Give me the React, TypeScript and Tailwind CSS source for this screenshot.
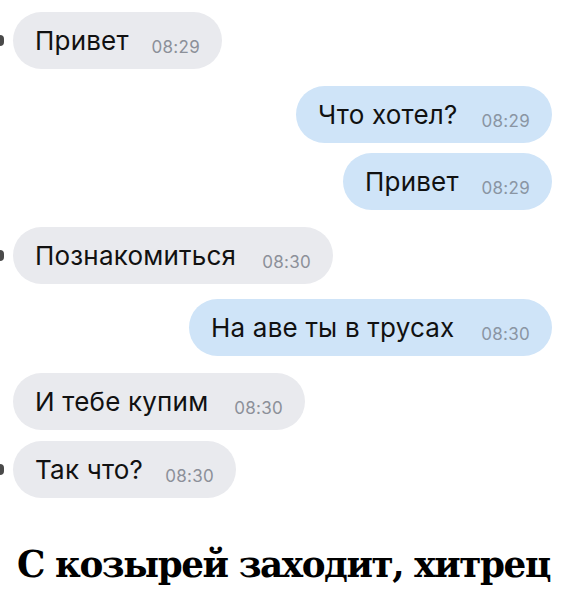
type Msg = {
  text: string;
  time: string;
  out?: boolean;
  tail?: boolean;
  width: string;
  mt: string;
};

const messages: Msg[] = [
  { text: "Привет", time: "08:29", tail: true, width: "w-[209px]", mt: "mt-[12px]" },
  { text: "Что хотел?", time: "08:29", out: true, width: "w-[256px]", mt: "mt-[17px]" },
  { text: "Привет", time: "08:29", out: true, width: "w-[209px]", mt: "mt-[10px]" },
  { text: "Познакомиться", time: "08:30", tail: true, width: "w-[320px]", mt: "mt-[17px]" },
  { text: "На аве ты в трусах", time: "08:30", out: true, width: "w-[363px]", mt: "mt-[15px]" },
  { text: "И тебе купим", time: "08:30", width: "w-[292px]", mt: "mt-[17px]" },
  { text: "Так что?", time: "08:30", tail: true, width: "w-[223px]", mt: "mt-[11px]" },
];

function Bubble({ m }: { m: Msg }) {
  return (
    <div
      className={`${m.mt} flex items-center ${m.out ? "justify-end pr-[14px]" : "justify-start"}`}
    >
      {!m.out && (
        <div className="w-[13px] flex justify-start">
          {m.tail && <div className="w-[4px] h-[11px] rounded-r-full bg-[#4a4a4a]" />}
        </div>
      )}
      <div
        className={`${m.width} h-[57px] rounded-full flex items-center justify-between px-[22px] ${
          m.out ? "bg-[#cfe4f8]" : "bg-[#e9eaee]"
        }`}
      >
        <span className="text-[26px] leading-8 text-[#111] whitespace-nowrap tracking-[0.2px]">
          {m.text}
        </span>
        <span
          className={`text-[17px] leading-5 translate-y-[6px] tracking-[0.3px] ${
            m.out ? "text-[#8a95a3]" : "text-[#8c9099]"
          }`}
        >
          {m.time}
        </span>
      </div>
    </div>
  );
}

export default function App() {
  return (
    <div className="w-[566px] h-[600px] bg-white overflow-hidden font-['Inter','Liberation_Sans',sans-serif]">
      {messages.map((m, i) => (
        <Bubble m={m} key={i} />
      ))}
      <div className="mt-[44px] flex justify-center">
        <p className="whitespace-nowrap font-['DejaVu_Serif',serif] font-bold text-[38px] leading-[44px] text-black tracking-[-1.5px] scale-x-[0.94]">
          С козырей заходит, хитрец
        </p>
      </div>
    </div>
  );
}
